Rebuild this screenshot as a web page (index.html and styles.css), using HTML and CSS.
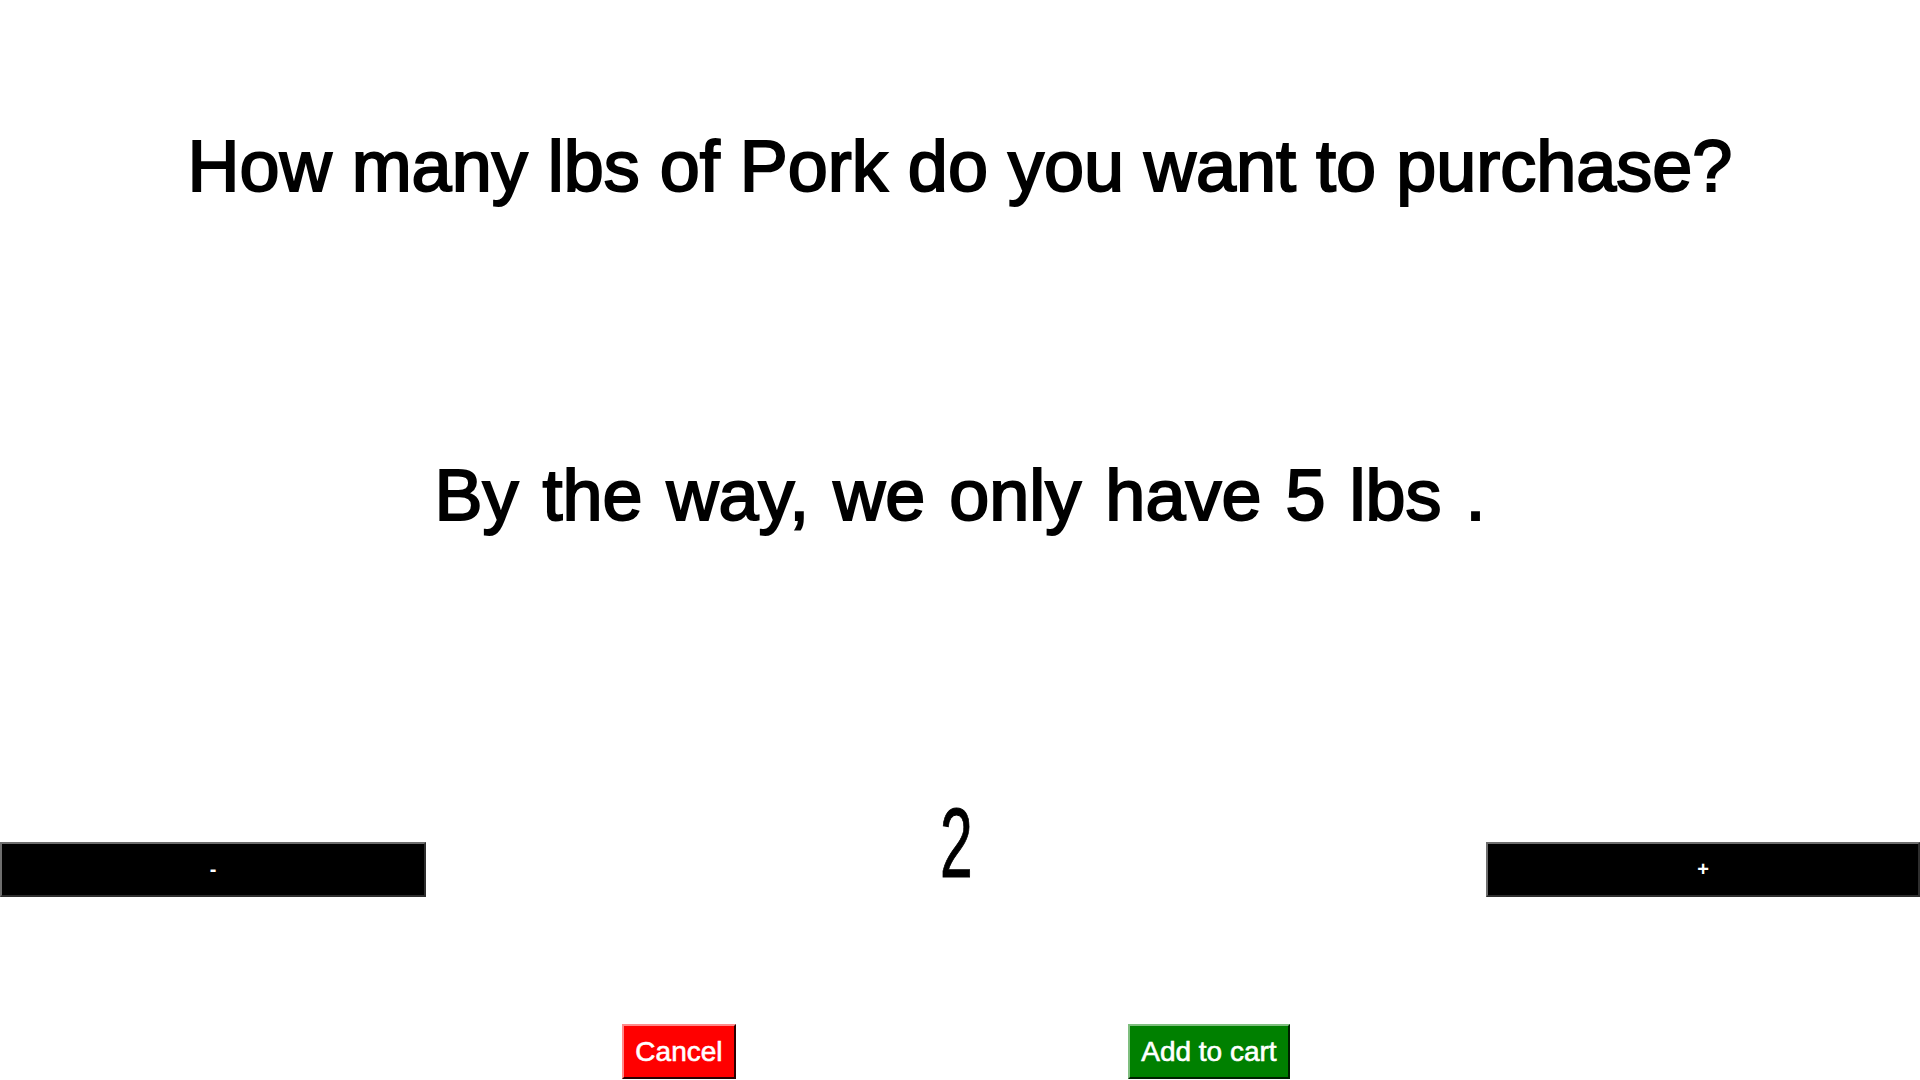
FILE: index.html
```html
<!DOCTYPE html>
<html lang="en">
<head>
<meta charset="utf-8">
<title>Purchase quantity</title>
<link rel="stylesheet" href="styles.css">
</head>
<body>
<main class="page">
  <h1 class="question">How many lbs of Pork do you want to purchase?</h1>
  <p class="notice">By the way, we only have 5 lbs .</p>
  <div class="stepper">
    <button class="step step-minus" type="button">-</button>
    <span class="qty">2</span>
    <button class="step step-plus" type="button">+</button>
  </div>
  <div class="actions">
    <button class="btn btn-cancel" type="button">Cancel</button>
    <button class="btn btn-add" type="button">Add to cart</button>
  </div>
</main>
</body>
</html>
```
FILE: styles.css
```css
html, body {
  margin: 0;
  padding: 0;
  background: #ffffff;
  color: #000000;
  font-family: "Liberation Sans", Arial, sans-serif;
  overflow: hidden;
}

.page {
  display: flex;
  flex-direction: column;
  width: 1920px;
  height: 1080px;
}

.question,
.notice {
  font-family: "Liberation Sans", Arial, sans-serif;
  font-size: 72px;
  line-height: 80px;
  font-weight: normal;
  text-align: center;
  -webkit-text-stroke: 2px #000000;
  white-space: nowrap;
}

.question {
  margin: 126px 0 0;
}

.notice {
  margin: 249px 0 0;
  word-spacing: 4px;
}

.stepper {
  display: flex;
  justify-content: space-between;
  align-items: flex-start;
  height: 103px;
  margin-top: 259px;
}

.step {
  box-sizing: border-box;
  height: 55px;
  margin-top: 48px;
  padding: 0;
  background: #000000;
  color: #ffffff;
  font-family: "Liberation Sans", Arial, sans-serif;
  font-size: 20px;
  font-weight: bold;
  border-style: solid;
  border-width: 2px;
  border-color: #6e6e6e #2e2e2e #2e2e2e #6e6e6e;
}

.step-minus {
  width: 426px;
}

.step-plus {
  width: 434px;
}

.qty {
  display: inline-block;
  font-family: "Liberation Sans", Arial, sans-serif;
  font-size: 98px;
  line-height: 98px;
  -webkit-text-stroke: 1px #000000;
  transform: scaleX(0.6);
}

.actions {
  display: flex;
  justify-content: space-around;
  margin: 127px 434px 0 426px;
}

.btn {
  box-sizing: border-box;
  height: 55px;
  padding: 0 11px;
  font-family: "Liberation Sans", Arial, sans-serif;
  font-size: 28px;
  line-height: 51px;
  color: #ffffff;
  -webkit-text-stroke: 0.6px #ffffff;
  border-style: solid;
  border-width: 2px;
}

.btn-cancel {
  background: #ff0000;
  border-color: #ff8a8a #2a0000 #2a0000 #ff8a8a;
}

.btn-add {
  background: #008000;
  border-color: #7fbf7f #002000 #002000 #7fbf7f;
}
```
